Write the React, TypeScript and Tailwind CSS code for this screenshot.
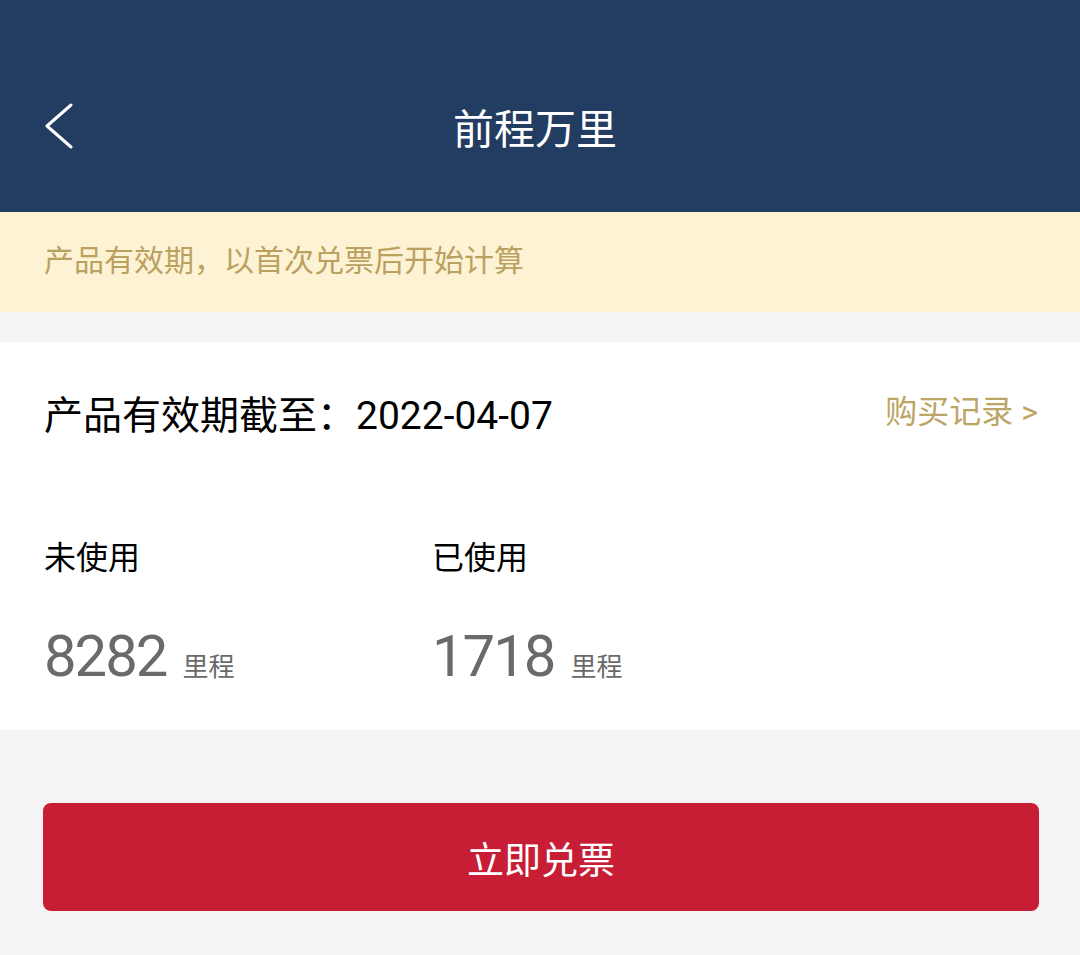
import React from 'react';

const font = { fontFamily: 'Roboto, "Noto Sans CJK SC", sans-serif' };

const BackIcon = () => (
  <svg width="30" height="46" viewBox="0 0 30 46" fill="none">
    <path d="M26 2 L2 23 L26 44" stroke="#ffffff" strokeWidth="3" strokeLinecap="round" strokeLinejoin="round" />
  </svg>
);

const Stat = ({ label, value }: { label: string; value: string }) => (
  <div className="w-[388px] flex flex-col">
    <div className="text-[32px] leading-[40px] text-black">{label}</div>
    <div className="mt-[49px] flex items-baseline">
      <span className="text-[58px] leading-[58px] tracking-[-2px] text-[#6a6a6a]">{value}</span>
      <span className="ml-[16px] text-[26px] text-[#6a6a6a]">里程</span>
    </div>
  </div>
);

export default function App() {
  return (
    <div className="w-[1080px] h-[955px] bg-[#f4f4f4] flex flex-col" style={font}>
      {/* header */}
      <div className="h-[212px] bg-[#233c62] pt-[50px] shrink-0">
        <div className="relative h-[162px] flex items-center justify-center">
          <div className="absolute left-[45px] top-[53px]">
            <BackIcon />
          </div>
          <div className="text-[41px] text-white ml-[-10px]">前程万里</div>
        </div>
      </div>

      {/* notice */}
      <div className="h-[100px] bg-[#fdf2d4] flex items-center px-[44px] shrink-0">
        <span className="text-[30px] text-[#baa15f] -mt-[3px]">产品有效期，以首次兑票后开始计算</span>
      </div>

      <div className="h-[30px] shrink-0" />

      {/* card */}
      <div className="h-[388px] bg-white px-[44px] flex flex-col shrink-0">
        <div className="h-[148px] flex items-center justify-between">
          <div className="text-[39px] text-black">产品有效期截至：2022-04-07</div>
          <div className="text-[32px] text-[#bca565] -mt-[8px] mr-[-2px]">购买记录 &gt;</div>
        </div>
        <div className="flex mt-[48px]">
          <Stat label="未使用" value="8282" />
          <Stat label="已使用" value="1718" />
        </div>
      </div>

      {/* action */}
      <div className="pt-[73px]">
        <button className="ml-[43px] w-[996px] h-[108px] rounded-lg bg-[#c71d35] text-white text-[37px] flex items-center justify-center pt-[10px]">
          立即兑票
        </button>
      </div>
    </div>
  );
}
